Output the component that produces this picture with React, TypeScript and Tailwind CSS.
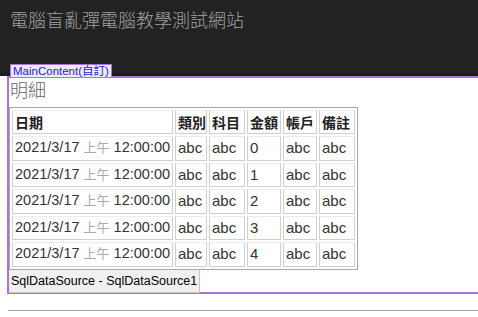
import React from 'react';

const ROWS = [0, 1, 2, 3, 4];

const HEADERS = [
  { label: '日期', w: 'w-[161px]' },
  { label: '類別', w: 'w-[32px]' },
  { label: '科目', w: 'w-[36px]' },
  { label: '金額', w: 'w-[34px]' },
  { label: '帳戶', w: 'w-[34px]' },
  { label: '備註', w: 'w-[36px]' },
];

const cellCls =
  'h-[24px] border border-[#cfcfcf] border-t-[#ececec] px-[2px] py-0 text-left align-middle whitespace-nowrap overflow-hidden';

export default function App() {
  return (
    <div className="w-[478px] h-[317px] overflow-hidden bg-white font-['Liberation_Sans','Noto_Sans_CJK_TC',sans-serif]">
      {/* Site header */}
      <div className="h-[76px] bg-[#222222] border-b-[3px] border-[#1c1c1c]">
        <div className="pl-[10px] pt-[7px] text-[18px] leading-[24px] font-light text-[#a0a0a0] font-['Noto_Sans_CJK_TC',sans-serif]">
          電腦盲亂彈電腦教學測試網站
        </div>
      </div>

      {/* Content placeholder */}
      <div className="relative ml-[7px] h-[218px] border-2 border-r-0 border-[#ab72da]">
        <div className="absolute z-10 left-[1px] -top-[14px] h-[14px] px-[2px] bg-[#efe9fa] border border-[#ab72da] text-[11.5px] leading-[12px] text-[#2424c8] whitespace-nowrap">
          MainContent(自訂)
        </div>

        <div className="h-[29px] pt-[2px] pl-[1px] text-[18px] leading-[19px] font-light text-[#666666] font-['Noto_Sans_CJK_TC',sans-serif]">
          明細
        </div>

        <table className="w-[349px] border-separate border-spacing-[2px] border border-[#a8a8a8] text-[15px] text-[#333333] table-fixed">
          <thead>
            <tr>
              {HEADERS.map(h => (
                <th
                  key={h.label}
                  className={`${cellCls} ${h.w} font-semibold text-[14px] text-[#222222] font-['Noto_Sans_CJK_TC',serif]`}
                >
                  {h.label}
                </th>
              ))}
            </tr>
          </thead>
          <tbody>
            {ROWS.map(i => (
              <tr key={i}>
                <td className={`${cellCls} text-[14.5px]`}>
                  2021/3/17 <span className="text-[13px] text-[#aaaaaa]">上午</span> 12:00:00
                </td>
                <td className={cellCls}>abc</td>
                <td className={cellCls}>abc</td>
                <td className={cellCls}>{i}</td>
                <td className={cellCls}>abc</td>
                <td className={cellCls}>abc</td>
              </tr>
            ))}
          </tbody>
        </table>

        <div className="inline-block h-[23px] bg-[#f0f0f0] border-r border-b border-[#c8c8c8] pl-[2px] pr-[2px] text-[12.5px] leading-[22px] text-black whitespace-nowrap align-top">
          SqlDataSource - SqlDataSource1
        </div>
      </div>

      <div className="mt-[16px] ml-[8px] border-t border-[#a6a6a6]" />
    </div>
  );
}
